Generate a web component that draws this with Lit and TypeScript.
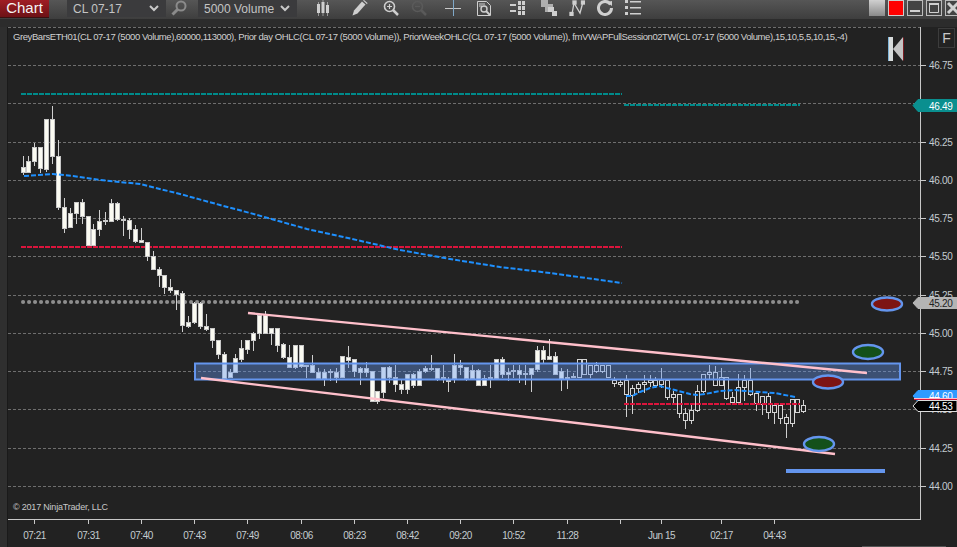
import { LitElement, css, html, svg } from "lit";
import { customElement } from "lit/decorators.js";

type Row = [number, number, number, number, number];
interface Candle {
  x: number;
  top: number;
  bottom: number;
  high: number;
  low: number;
  dark: boolean;
}

// rows are read off 3x crops: x, body top, body bottom, wick top, wick bottom
const group = (ox: number, oy: number, dark: boolean, rows: Row[]): Candle[] =>
  rows.map(([x, t, b, h, l]) => ({
    x: Math.floor(ox + x / 3),
    top: Math.round(oy + t / 3),
    bottom: Math.round(oy + b / 3),
    high: Math.round(oy + h / 3),
    low: Math.round(oy + l / 3),
    dark,
  }));

const candles: Candle[] = [
  ...group(0, 90, false, [
    [70, 230, 245, 198, 255], [85, 212, 245, 198, 245], [103, 170, 212, 158, 228], [121, 170, 235, 170, 248],
    [139, 88, 236, 88, 245], [157, 88, 197, 48, 222], [175, 197, 350, 150, 360], [193, 350, 413, 325, 428],
    [211, 368, 410, 355, 414], [229, 335, 368, 335, 402], [247, 335, 377, 328, 402], [265, 377, 464, 377, 464],
    [280, 418, 464, 403, 464], [298, 392, 418, 360, 438], [316, 390, 392, 366, 404], [334, 340, 392, 328, 392],
    [352, 340, 386, 337, 392], [370, 386, 391, 378, 438], [388, 391, 418, 385, 447], [406, 418, 452, 405, 460],
    [424, 451, 455, 414, 455],
  ]),
  ...group(130, 230, false, [
    [52, 35, 77, 35, 92], [70, 77, 118, 63, 118], [88, 118, 136, 112, 170], [103, 136, 172, 136, 192],
    [121, 172, 179, 148, 188], [139, 181, 191, 181, 240], [157, 190, 284, 183, 305], [175, 275, 288, 258, 293],
    [193, 218, 275, 215, 283], [211, 220, 287, 216, 296], [229, 287, 296, 252, 302], [247, 295, 329, 295, 354],
    [265, 329, 371, 329, 387], [283, 371, 445, 367, 445], [301, 425, 440, 418, 445], [316, 385, 425, 372, 425],
    [334, 355, 386, 331, 395], [352, 329, 356, 329, 372], [370, 310, 329, 307, 362], [388, 256, 310, 256, 327],
    [406, 256, 310, 243, 310], [424, 295, 310, 295, 345], [442, 295, 344, 295, 366], [460, 343, 380, 340, 387],
    [478, 380, 412, 345, 412], [496, 346, 412, 346, 417], [514, 346, 407, 346, 414], [529, 406, 408, 406, 445],
    [547, 405, 425, 375, 425], [565, 425, 445, 415, 445], [583, 425, 445, 418, 467], [601, 424, 426, 418, 452],
    [619, 425, 440, 415, 458],
  ]),
  ...group(340, 330, false, [
    [8, 78, 140, 78, 140], [25, 80, 90, 48, 115], [43, 88, 124, 88, 140], [61, 115, 125, 112, 165],
    [79, 115, 125, 97, 140], [97, 124, 212, 124, 212], [112, 184, 212, 184, 222], [130, 112, 185, 112, 205],
    [148, 112, 140, 108, 160], [166, 140, 163, 105, 185], [184, 163, 176, 150, 192], [202, 133, 176, 133, 192],
    [220, 133, 165, 130, 175], [238, 123, 165, 118, 165], [256, 115, 124, 108, 130], [274, 115, 116, 75, 122],
    [292, 115, 145, 115, 152], [310, 142, 143, 105, 158], [325, 150, 151, 142, 185], [343, 105, 145, 72, 158],
    [361, 104, 112, 90, 135], [379, 112, 145, 112, 153], [397, 121, 145, 105, 150], [415, 121, 164, 118, 165],
    [433, 145, 164, 135, 168], [451, 142, 143, 105, 175], [469, 88, 145, 88, 145], [487, 88, 132, 82, 145],
    [505, 125, 132, 115, 152], [520, 120, 122, 105, 145], [538, 120, 132, 105, 158], [556, 130, 131, 105, 165],
    [574, 115, 132, 115, 185], [592, 60, 117, 48, 125], [610, 60, 87, 48, 100], [628, 79, 87, 27, 90],
    [646, 79, 132, 66, 135], [664, 122, 144, 115, 182], [682, 140, 145, 118, 178], [700, 138, 139, 130, 145],
  ]),
  ...group(340, 330, true, [
    [718, 88, 142, 88, 145], [733, 88, 132, 88, 135], [751, 105, 132, 105, 145], [769, 105, 122, 97, 130],
    [787, 105, 122, 105, 130], [805, 105, 142, 105, 145],
  ]),
  ...group(610, 350, true, [
    [13, 90, 98, 80, 112], [31, 97, 103, 90, 112], [49, 90, 133, 75, 200], [67, 115, 135, 105, 193],
    [85, 103, 115, 95, 130], [103, 97, 103, 75, 130], [121, 90, 97, 75, 112], [136, 90, 105, 82, 115],
    [154, 90, 103, 55, 115], [172, 90, 142, 90, 150], [190, 133, 142, 122, 160], [208, 133, 190, 133, 203],
    [226, 190, 211, 175, 236], [244, 181, 211, 165, 222], [262, 124, 181, 105, 186], [280, 72, 124, 72, 130],
    [298, 65, 72, 45, 90], [316, 65, 106, 48, 106], [334, 80, 106, 55, 106], [349, 80, 143, 80, 150],
    [367, 142, 157, 125, 157], [385, 112, 157, 72, 157], [403, 90, 112, 75, 153], [421, 90, 131, 55, 138],
    [439, 130, 160, 130, 182], [457, 138, 163, 138, 194], [475, 138, 185, 128, 208], [493, 165, 185, 165, 222],
    [511, 165, 203, 165, 222], [529, 202, 220, 192, 263], [547, 148, 220, 148, 230], [562, 148, 185, 148, 190],
    [580, 166, 184, 150, 190],
  ]),
];

const AXIS_X = 912; // price axis inside the chart svg, which starts at x = 8
const offset = 8;

const priceY = (p: number) => Math.round(65 + ((46.75 - p) / 0.25) * 38.27) - 27;
const gridPrices = [46.75, 46.5, 46.25, 46.0, 45.75, 45.5, 45.25, 45.0, 44.75, 44.5, 44.25, 44.0];
const ticks: [number, string][] = [
  [34, "07:21"], [88, "07:31"], [141, "07:40"], [194, "07:43"], [247, "07:49"], [301, "08:06"], [354, "08:23"],
  [407, "08:42"], [460, "09:20"], [513, "10:52"], [567, "11:28"], [620, ""], [661, "Jun 15"], [721, "02:17"], [774, "04:43"],
];
const vwapLong = "24,176 53,174 73,176 100,180 140,184 180,194 220,205 250,213 307,229 348,238 400,250 450,259 500,267 550,273 622,283";
const vwapShort = "626,396 632,396 640,392 650,388 660,386 667,388 675,390 690,394 697,395 705,394 720,391 735,390 745,391 760,392 775,393 795,397";
const legend =
  "GreyBarsETH01(CL 07-17 (5000 Volume),60000,113000), Prior day OHLC(CL 07-17 (5000 Volume)), PriorWeekOHLC(CL 07-17 (5000 Volume)), fmVWAPFullSession02TW(CL 07-17 (5000 Volume),15,10,5,5,10,15,-4)";
const tags = [
  { y: 78.5, h: 6, text: "46.49", fill: "#0a8f8f", color: "#fff", stroke: "#0a8f8f" },
  { y: 276, h: 5.5, text: "45.20", fill: "#b4b4b4", color: "#222", stroke: "#b4b4b4" },
  { y: 369, h: 5.5, text: "44.60", fill: "#2f9bff", color: "#fff", stroke: "#2f9bff" },
  { y: 379, h: 5.5, text: "44.53", fill: "#000", color: "#fff", stroke: "#ddd" },
];

const shift = (points: string) =>
  points
    .split(" ")
    .map((p) => {
      const [x, y] = p.split(",").map(Number);
      return `${x - offset},${y - 27}`;
    })
    .join(" ");

@customElement("app-root")
export class AppRoot extends LitElement {
  static styles = css`
    :host {
      display: block;
      width: 957px;
      height: 547px;
      overflow: hidden;
      background: #222;
      font-family: "Liberation Sans", Arial, sans-serif;
    }
    .toolbar {
      display: flex;
      align-items: flex-start;
      height: 27px;
      box-sizing: border-box;
      background: linear-gradient(#565656 0, #3e3e3e 19px, #2c2c2c 19px, #2c2c2c 27px);
    }
    .title {
      width: 49px;
      height: 18px;
      line-height: 15px;
      text-align: center;
      font-size: 15px;
      color: #f4f4f4;
      background: linear-gradient(#a01d24, #6d1216);
      border-bottom: 1px solid #3a1010;
      box-sizing: border-box;
    }
    .combo {
      display: flex;
      align-items: center;
      justify-content: space-between;
      box-sizing: border-box;
      width: 99px;
      height: 17px;
      padding: 0 7px 0 6px;
      background: #3b3b3d;
      color: #c4c4c4;
      font-size: 12px;
    }
    .combo.symbol {
      margin-left: 18px;
    }
    .combo svg {
      width: 10px;
      height: 7px;
    }
    .icon {
      flex: none;
      width: 16px;
      height: 16px;
      color: #cfcfcf;
    }
    .icon.dim {
      color: #5a5a5a;
    }
    .search {
      margin: 0 11px 0 5px;
      color: #8b8b8b;
    }
    .tools {
      display: flex;
      align-items: flex-start;
      margin-left: 18px;
    }
    .tools .icon:nth-child(2) {
      margin-left: 21px;
    }
    .tools .icon:nth-child(3),
    .tools .icon:nth-child(6),
    .tools .icon:nth-child(8) {
      margin-left: 15px;
    }
    .tools .icon:nth-child(4),
    .tools .icon:nth-child(9),
    .tools .icon:nth-child(10),
    .tools .icon:nth-child(11) {
      margin-left: 12px;
    }
    .tools .icon:nth-child(5),
    .tools .icon:nth-child(7) {
      margin-left: 18px;
    }
    .window {
      display: flex;
      margin-left: auto;
      margin-right: -4px;
      gap: 3px;
    }
    .win {
      width: 16px;
      height: 16px;
      box-sizing: border-box;
      color: #d0d0d0;
    }
    .win.grey {
      background: linear-gradient(#d0d0d0, #8a8a8a);
    }
    .win.red {
      background: #f00;
      border: 1px solid #ccc;
    }
    .win.line {
      border: 1px solid #bbb;
      background: #444;
    }
    .body {
      display: flex;
      height: 520px;
    }
    .rail {
      flex: none;
      width: 8px;
      background: #2f2f2f;
      border-right: 1px solid #1a1a1a;
      box-sizing: border-box;
    }
    .chart {
      flex: 1;
      position: relative;
    }
    .chart > svg {
      display: block;
      width: 949px;
      height: 520px;
    }
    .grid {
      stroke: #6e6e6e;
      stroke-width: 1;
      stroke-dasharray: 3 2;
    }
    .axis {
      stroke: #c8c8c8;
      stroke-width: 1;
    }
    .price {
      font-size: 10px;
      letter-spacing: -0.3px;
      fill: #c4ccd0;
    }
    .time {
      font-size: 10px;
      letter-spacing: -0.5px;
      fill: #c4ccd0;
      text-anchor: middle;
    }
    .legend {
      font-size: 9.5px;
      letter-spacing: -0.42px;
      fill: #d0d0d0;
    }
    .copy {
      font-size: 9px;
      letter-spacing: -0.2px;
      fill: #c8c8c8;
    }
    .wick {
      stroke: #cfcfcf;
      stroke-width: 1;
    }
    .candle {
      fill: #fbfbf2;
      stroke: #c8c8c8;
      stroke-width: 1;
    }
    .candle.dark {
      fill: #222;
      stroke: #d4d4d4;
    }
    .level {
      fill: none;
      stroke-width: 2;
      stroke-dasharray: 5 1;
    }
    .teal {
      stroke: #008b8b;
    }
    .red {
      stroke: #dc143c;
    }
    .dots {
      fill: none;
      stroke: #8e8e8e;
      stroke-width: 4;
      stroke-linecap: round;
      stroke-dasharray: 0.1 5.9;
    }
    .vwap {
      fill: none;
      stroke: #1e90ff;
      stroke-width: 2;
      stroke-dasharray: 5 2;
    }
    .band {
      fill: rgba(100, 149, 237, 0.4);
      stroke: #6495ed;
      stroke-width: 2;
    }
    .trend {
      stroke: #ffc0cb;
      stroke-width: 2.4;
    }
    .target {
      stroke: #6495ed;
      stroke-width: 2.4;
    }
    .target.sell {
      fill: #7d1414;
    }
    .target.buy {
      fill: #14501a;
    }
    .solid {
      fill: #6495ed;
    }
    .f-box {
      position: absolute;
      right: 2px;
      top: 1px;
      width: 17px;
      height: 20px;
      line-height: 18px;
      text-align: center;
      font-size: 14px;
      color: #c8c8c8;
      border: 1px solid #3c3c3c;
      box-sizing: border-box;
    }
    .foot {
      position: absolute;
      right: 11px;
      bottom: 0;
      width: 84px;
      height: 1px;
      background: #555;
    }
  `;

  private chevron() {
    return html`<svg viewBox="0 0 10 7"><path d="M1 1l4 4 4-4" fill="none" stroke="#c8c8c8" stroke-width="2" /></svg>`;
  }

  private renderCandles() {
    return candles.map((c) => {
      const y = c.top - 27 + 0.5;
      const h = Math.max(c.bottom - c.top, 1);
      const x = c.x - offset;
      return svg`<line class="wick" x1=${x + 0.5} x2=${x + 0.5} y1=${c.high - 27} y2=${c.low - 27} />
        <rect class="candle ${c.dark ? "dark" : ""}" x=${x - 1.5} y=${y} width="4" height=${h} />`;
    });
  }

  private renderPlot() {
    return svg`
      <line class="grid" x1="0" x2=${AXIS_X} y1="0.5" y2="0.5" />
      ${gridPrices.map((p) => svg`<line class="grid" x1="0" x2=${AXIS_X} y1=${priceY(p) + 0.5} y2=${priceY(p) + 0.5} />`)}
      <polyline class="level teal" points="13,67 614,67" />
      <polyline class="level teal" points="616,78 792,78" />
      <polyline class="level red" points="13,220 614,220" />
      <polyline class="dots" points="15,275 792,275" />
      ${this.renderCandles()}
      <polyline class="vwap" points=${shift(vwapLong)} />
      <polyline class="vwap" points=${shift(vwapShort)} />
      <polyline class="level red" points="616,377 792,377" />
      <rect class="band" x="187" y="336.500" width="705" height="16" />
      <line class="trend" x1="240" y1="286" x2="859" y2="346" />
      <line class="trend" x1="193" y1="351" x2="827" y2="427" />
      <ellipse class="target sell" cx="879" cy="277" rx="15" ry="6.500" />
      <ellipse class="target buy" cx="860" cy="325" rx="15" ry="7" />
      <ellipse class="target sell" cx="820" cy="355" rx="15" ry="6.500" />
      <ellipse class="target buy" cx="811" cy="417" rx="15" ry="7" />
      <rect class="solid" x="778" y="442" width="99" height="4" />
      <g>
        <path d="M880 10h5v24h-5z" fill="#d8dcdc" />
        <path d="M895 10v24l-10-12z" fill="#c4c4c4" />
        <path d="M880 10h1v24h-1z" fill="#7fb4d8" />
        <path d="M895 10l1 1v22l-1 1z" fill="#7a1c22" />
      </g>
    `;
  }

  private renderAxes() {
    return svg`
      <line class="axis" x1=${AXIS_X + 0.5} x2=${AXIS_X + 0.5} y1="0" y2="492" />
      <line class="axis" x1="0" x2=${AXIS_X + 1} y1="492.500" y2="492.500" />
      ${gridPrices.map(
        (p) => svg`<line class="axis" x1=${AXIS_X} x2=${AXIS_X + 6} y1=${priceY(p) + 0.5} y2=${priceY(p) + 0.5} />
          ${p === 46.5 ? null : svg`<text class="price" x="921" y=${priceY(p) + 4}>${p.toFixed(2)}</text>`}`
      )}
      ${tags.map(
        (t) => svg`<path d="M949 ${t.y - t.h}H910l-5 ${t.h} 5 ${t.h}H949z" fill=${t.fill} stroke=${t.stroke} />
          <text class="price" style="fill:${t.color}" x="921" y=${t.y + 4}>${t.text}</text>`
      )}
      <line x1="906" x2="949" y1="371.500" y2="371.500" stroke="#ffc0cb" />
      <line x1="906" x2="949" y1="372.500" y2="372.500" stroke="#dc143c" />
      ${ticks.map(
        ([x, label]) => svg`<line class="axis" x1=${x - offset + 0.5} x2=${x - offset + 0.5} y1="492" y2="497" />
          <text class="time" x=${x - offset + 0.5} y="512">${label}</text>`
      )}
      <text class="legend" x="5" y="13">${legend}</text>
      <text class="copy" x="5" y="483">© 2017 NinjaTrader, LLC</text>
    `;
  }

  render() {
    return html`
      <div class="toolbar">
        <div class="title">Chart</div>
        <div class="combo symbol">CL 07-17 ${this.chevron()}</div>
        <svg class="icon search" viewBox="0 0 16 16" fill="none" stroke="currentColor">
          <circle cx="10" cy="6" r="4.500" stroke-width="2" /><path d="M6.500 9.500L1.500 14.500" stroke-width="3" />
        </svg>
        <div class="combo">5000 Volume ${this.chevron()}</div>
        <div class="tools">
          <svg class="icon" viewBox="0 0 16 16" fill="currentColor">
            <path d="M2 4h3v9H2zM6.500 2h3v11h-3zM11 5h3v8h-3z" /><path d="M3.200 2h.6v14h-.6zM7.700 0h.6v16h-.6zM12.200 2h.6v14h-.6z" />
          </svg>
          <svg class="icon" viewBox="0 0 16 16" fill="currentColor">
            <path d="M0.500 15.500l1.500-5 8-9 3.500 3-8 9z" /><path d="M11 0.500l1-.5 3.500 3-.5 1.200z" />
          </svg>
          <svg class="icon" viewBox="0 0 16 16" fill="none" stroke="currentColor">
            <circle cx="6.500" cy="6.500" r="5" stroke-width="1.600" /><path d="M10 10l5 5" stroke-width="2.500" /><path d="M4 6.500h5M6.500 4v5" stroke-width="1.200" />
          </svg>
          <svg class="icon dim" viewBox="0 0 16 16" fill="none" stroke="currentColor">
            <circle cx="6.500" cy="6.500" r="5" stroke-width="1.600" /><path d="M10 10l5 5" stroke-width="2.500" /><path d="M4 6.500h5" stroke-width="1.200" />
          </svg>
          <svg class="icon" viewBox="0 0 16 16" stroke-width="1">
            <path d="M0 8.500h16" stroke="#c8c8c8" /><path d="M8.500 0v16" stroke="#7fa8c8" />
          </svg>
          <svg class="icon" viewBox="0 0 16 16" fill="none" stroke="currentColor">
            <path d="M1.500 1.500h9l4 4v10h-13z" /><circle cx="8" cy="9" r="3" stroke-width="1.400" /><path d="M10 11l4 4" stroke-width="2" /><path d="M3 4h6M3 6h3" />
          </svg>
          <svg class="icon" viewBox="0 0 16 16" fill="currentColor">
            <path d="M0 4h6v2H0zM0 10h6v2H0zM8 1h3v4H8zM8 6h3v4H8zM8 11h3v4H8zM12 1h3v4h-3zM12 6h3v4h-3zM12 11h3v4h-3z" />
          </svg>
          <svg class="icon" viewBox="0 0 16 16" fill="currentColor">
            <path d="M0 0h7v7H0zM4 4h8v8H4z" opacity=".75" /><path d="M7 7h6v5H7zM11 11h5v5h-5z" />
          </svg>
          <svg class="icon" viewBox="0 0 16 16" fill="none" stroke="currentColor" stroke-width="1.300">
            <path d="M3 14L5 3l6 10 3-11" /><rect x="1" y="12.500" width="3" height="3" fill="currentColor" /><rect x="4" y="1" width="3" height="3" fill="currentColor" /><rect x="12.500" y="1" width="3" height="3" fill="currentColor" />
          </svg>
          <svg class="icon" viewBox="0 0 16 16" fill="none" stroke="currentColor" stroke-width="3">
            <path d="M13.500 4.500A6.500 6.500 0 1 0 14.500 8" /><path d="M10 2l5-1v5z" fill="currentColor" stroke="none" />
          </svg>
          <svg class="icon" viewBox="0 0 16 16" fill="currentColor">
            <path d="M0 0h3v3H0zM0 6h3v3H0zM0 12h3v3H0zM5 1h11v1.500H5zM5 7h11v1.500H5zM5 13h11v1.500H5z" />
          </svg>
        </div>
        <div class="window">
          <div class="win grey"></div>
          <div class="win red"></div>
          <svg class="win line" viewBox="0 0 14 14"><path d="M2 10h10" stroke="currentColor" stroke-width="2" /></svg>
          <svg class="win line" viewBox="0 0 14 14" fill="none" stroke="currentColor"><path d="M2.500 3.500h9v8h-9z" /><path d="M2 3h10" stroke-width="2" /></svg>
          <svg class="win line" viewBox="0 0 14 14" stroke="currentColor" stroke-width="3"><path d="M2 2l10 10M12 2L2 12" /></svg>
        </div>
      </div>
      <div class="body">
        <div class="rail"></div>
        <div class="chart">
          <svg viewBox="0 0 949 520" shape-rendering="auto">${this.renderPlot()}${this.renderAxes()}</svg>
          <div class="f-box">F</div>
          <div class="foot"></div>
        </div>
      </div>
    `;
  }
}
